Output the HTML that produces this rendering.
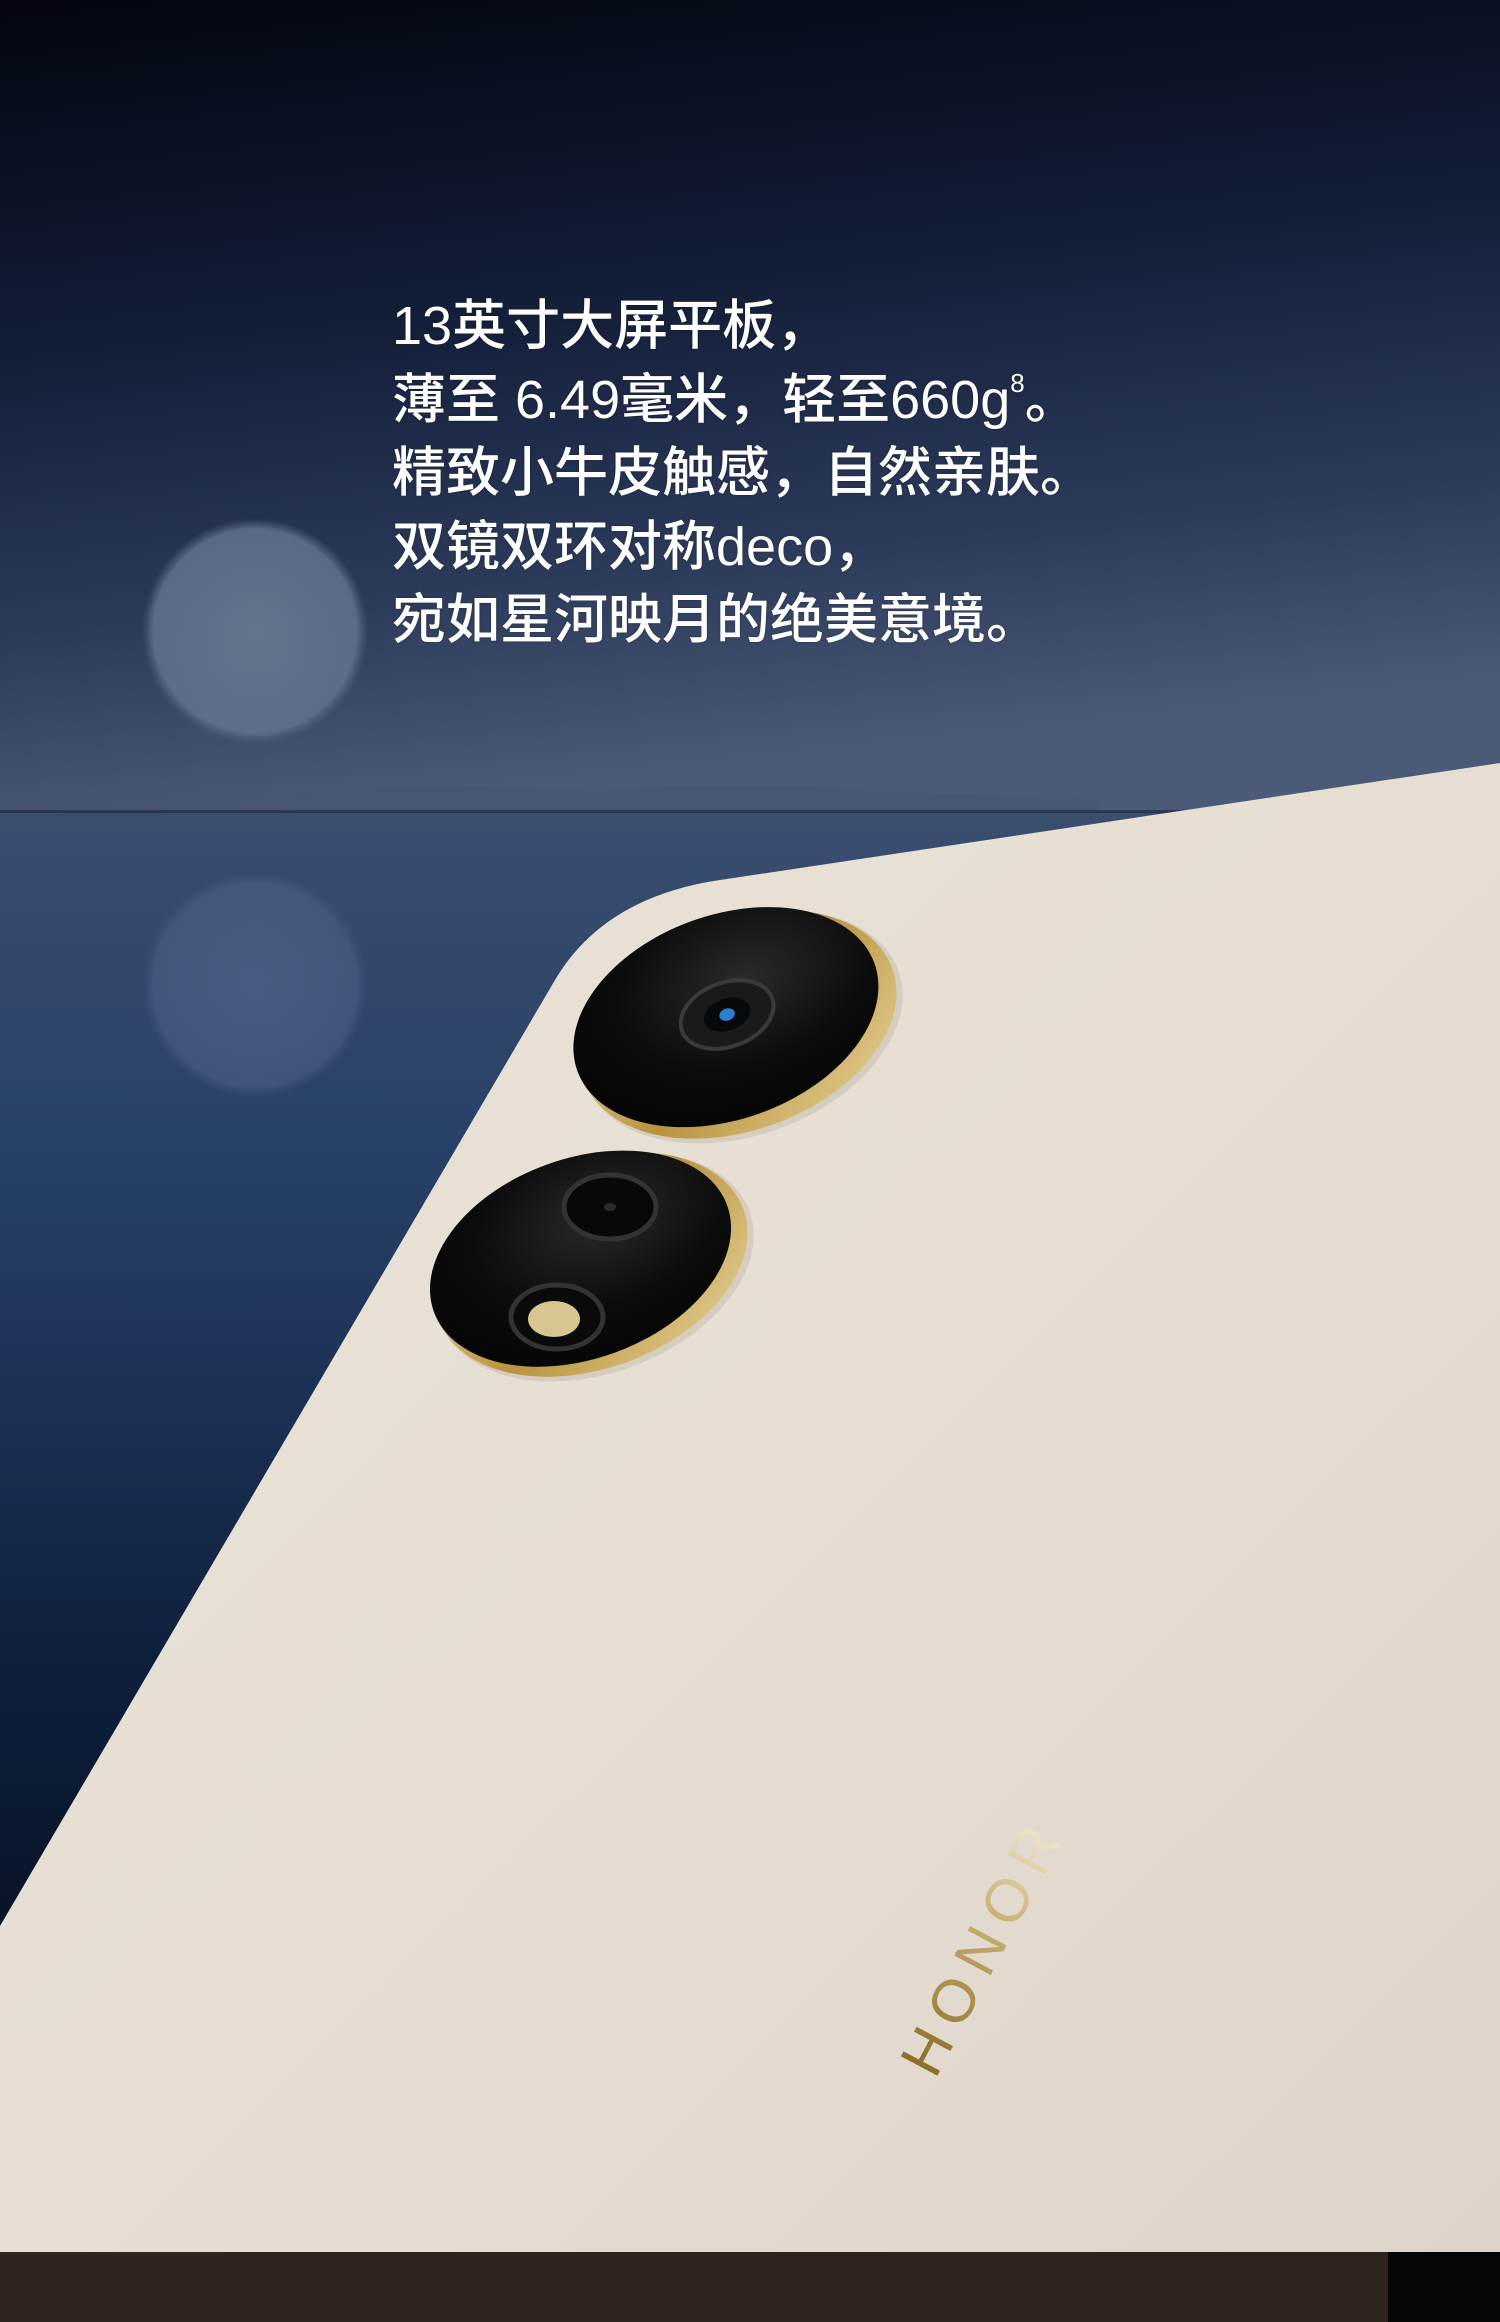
<!DOCTYPE html>
<html><head><meta charset="utf-8"><style>
html,body{margin:0;padding:0;width:1500px;height:2322px;overflow:hidden;background:#000}
.t{position:absolute;left:392px;top:290px;color:#fff;font-family:"Liberation Sans","Noto Sans CJK SC",sans-serif;font-size:54px;line-height:73.5px;font-weight:500;white-space:nowrap;text-shadow:0 0 2px rgba(0,0,0,.3)}
sup{font-size:26px;vertical-align:top;line-height:1;position:relative;top:6px}
</style></head><body>
<svg width="1500" height="2322" viewBox="0 0 1500 2322" style="position:absolute;left:0;top:0">
<defs>
<linearGradient id="sky" x1="0" y1="0" x2="0.2" y2="1">
<stop offset="0" stop-color="#03060f"/><stop offset="0.4" stop-color="#111c36"/><stop offset="0.75" stop-color="#2c3a5a"/><stop offset="1" stop-color="#4b5a76"/></linearGradient>
<linearGradient id="water" x1="0" y1="0" x2="0" y2="1">
<stop offset="0" stop-color="#3a4e6e"/><stop offset="0.25" stop-color="#264066"/><stop offset="0.6" stop-color="#0e1e3c"/><stop offset="1" stop-color="#02050c"/></linearGradient>
<radialGradient id="moon" cx="0.5" cy="0.5" r="0.5"><stop offset="0" stop-color="#6f7d96"/><stop offset="0.9" stop-color="#64728e"/><stop offset="1" stop-color="#55647f" stop-opacity="0"/></radialGradient>
<radialGradient id="moon2" cx="0.5" cy="0.5" r="0.5"><stop offset="0" stop-color="#52668a"/><stop offset="0.9" stop-color="#485c80"/><stop offset="1" stop-color="#3e5478" stop-opacity="0"/></radialGradient>
<linearGradient id="tab" x1="0" y1="0" x2="1" y2="1"><stop offset="0" stop-color="#eae3d7"/><stop offset="0.5" stop-color="#e6ded2"/><stop offset="1" stop-color="#ddd5c9"/></linearGradient>
<linearGradient id="gold" x1="0" y1="0" x2="1" y2="1"><stop offset="0" stop-color="#f0e2b8"/><stop offset="0.5" stop-color="#b8923e"/><stop offset="1" stop-color="#e8d49a"/></linearGradient>
<radialGradient id="blk" cx="0.6" cy="0.35" r="0.7"><stop offset="0" stop-color="#2a2a2c"/><stop offset="0.6" stop-color="#0c0c0d"/><stop offset="1" stop-color="#050505"/></radialGradient>
<linearGradient id="hon" x1="0" y1="0" x2="1" y2="0"><stop offset="0" stop-color="#8a6c28"/><stop offset="0.6" stop-color="#c9b072"/><stop offset="1" stop-color="#f4ecd8"/></linearGradient>
</defs>
<rect x="0" y="0" width="1500" height="812" fill="url(#sky)"/>
<rect x="0" y="812" width="1500" height="1450" fill="url(#water)"/>
<path d="M0,812 L0,798 Q120,792 260,796 Q420,782 600,790 Q760,780 900,792 L1100,800 L1100,812Z" fill="#46546f" opacity="0.5"/>
<rect x="0" y="810" width="1200" height="3" fill="#1c2438" opacity="0.6"/>
<circle cx="255" cy="631" r="113" fill="url(#moon)" opacity="0.85"/>
<circle cx="255" cy="985" r="113" fill="url(#moon2)" opacity="0.7"/>
<path d="M1500,763 L720,880 Q604,897 555,980 L0,1926 L0,2252 L1500,2252Z" fill="url(#tab)"/>
<rect x="0" y="2252" width="1388" height="70" fill="#2e241e"/>
<rect x="1388" y="2252" width="112" height="70" fill="#050505"/>
<g transform="rotate(-20 733 1022)">
<ellipse cx="740" cy="1030" rx="166" ry="108" fill="#c9c1b2" opacity="0.6"/>
<ellipse cx="737" cy="1026" rx="164" ry="106" fill="url(#gold)"/>
<ellipse cx="728" cy="1015" rx="158" ry="102" fill="url(#blk)"/>
<ellipse cx="730" cy="1013" rx="48" ry="32" fill="#1a1a1c" stroke="#3a3a3e" stroke-width="4"/>
<ellipse cx="730" cy="1013" rx="24" ry="16" fill="#08090c"/>
<ellipse cx="730" cy="1013" rx="8" ry="6" fill="#2a7fd0"/>
</g>
<g transform="rotate(-20 586 1262)">
<ellipse cx="593" cy="1270" rx="164" ry="106" fill="#c9c1b2" opacity="0.6"/>
<ellipse cx="590" cy="1266" rx="162" ry="104" fill="url(#gold)"/>
<ellipse cx="582" cy="1257" rx="156" ry="100" fill="url(#blk)"/>
</g>
<ellipse cx="610" cy="1207" rx="46" ry="32" fill="#080809" stroke="#333337" stroke-width="5"/>
<ellipse cx="610" cy="1207" rx="6" ry="4" fill="#2a2a2e"/>
<ellipse cx="557" cy="1317" rx="46" ry="32" fill="#0a0a0b" stroke="#333337" stroke-width="5"/>
<ellipse cx="554" cy="1319" rx="26" ry="18" fill="#d8c690"/>
<text x="0" y="0" transform="translate(935 2080) rotate(-62)" font-family="Liberation Sans, sans-serif" font-size="60" letter-spacing="12" fill="url(#hon)">HONOR</text>
</svg>
<div class="t">13英寸大屏平板，<br>薄至 6.49毫米，轻至660g<sup>8</sup>。<br>精致小牛皮触感，自然亲肤。<br>双镜双环对称deco，<br>宛如星河映月的绝美意境。</div>
</body></html>
